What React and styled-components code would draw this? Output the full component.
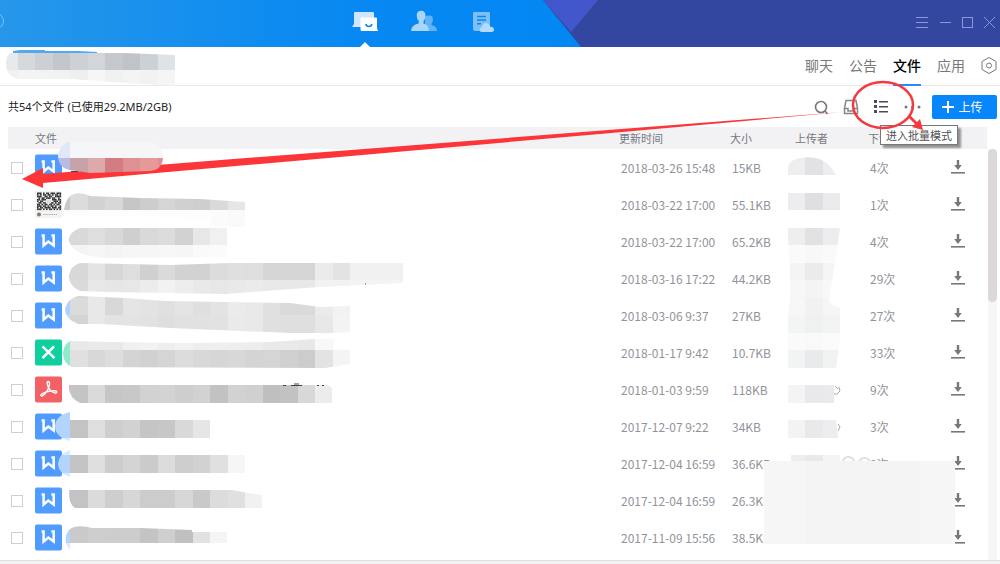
import React from 'react';
import styled, { createGlobalStyle } from 'styled-components';

const GlobalStyle = createGlobalStyle`
    * {
      box-sizing: border-box;
    }

    body {
      margin: 0;
      background-color: #fff;
      font-family: 'Noto Sans CJK SC', 'Noto Sans', sans-serif;
      font-size: 12px;
      color: #333;
    }

    button {
      font-family: inherit;
      border: 0;
      padding: 0;
      background: none;
      cursor: pointer;
    }

    svg {
      display: block;
    }
`;

const Window = styled.div`
    position: relative;
    display: flex;
    flex-direction: column;
    min-height: 100vh;
    overflow: hidden;
`;

const TitleBar = styled.header`
    position: relative;
    display: flex;
    align-items: stretch;
    justify-content: space-between;
    height: 47px;
    background: linear-gradient(90deg, #2697ea 0%, #0788f2 36%, #0287f3 60%);
`;

const Facets = styled.svg`
    position: absolute;
    top: 0;
    right: 0;
`;

const AvatarRing = styled.div`
    width: 16px;
    height: 16px;
    margin: 13px 0 0 -12px;
    border: 1px solid #7cc0f5;
    border-radius: 50%;
`;

const MainNav = styled.nav`
    display: flex;
    gap: 31px;
    margin-right: 73px;
`;

const NavButton = styled.button`
    position: relative;
    display: flex;
    justify-content: center;
    width: 28px;
    padding-top: 10px;

    &::after {
      content: '';
      display: ${({ $active }) => ($active ? 'block' : 'none')};
      position: absolute;
      bottom: 0;
      left: 9px;
      border: 5px solid transparent;
      border-top: 0;
      border-bottom-color: #fff;
    }
`;

const WindowButtons = styled.div`
    position: relative;
    display: flex;
    align-items: center;
    gap: 8px;
    padding: 0 4px 4px 0;
`;

const WindowButton = styled.button`
    display: flex;
    width: 14px;
    height: 14px;
`;

const GroupBar = styled.div`
    display: flex;
    align-items: stretch;
    justify-content: flex-end;
    height: 39px;
    padding-right: 3px;
    border-bottom: 1px solid #e8e8ea;
`;

const Tabs = styled.nav`
    display: flex;
    gap: 16px;
    margin-right: 16px;
`;

const Tab = styled.a`
    display: flex;
    align-items: center;
    height: 39px;
    padding-bottom: 1px;
    font-size: 14px;
    text-decoration: none;
    color: ${({ $active }) => ($active ? '#000' : '#77787c')};
    font-weight: ${({ $active }) => ($active ? 500 : 400)};
    border-bottom: 2px solid ${({ $active }) => ($active ? '#2f86f6' : 'transparent')};
`;

const ToolBar = styled.div`
    display: flex;
    align-items: center;
    justify-content: space-between;
    height: 41px;
    padding: 0 3px 0 8px;
`;

const Usage = styled.p`
    margin: 0;
    font-family: 'Noto Sans', 'Noto Sans CJK SC', sans-serif;
    font-size: 11px;
    line-height: 18px;
    color: #222;
`;

const Tools = styled.div`
    display: flex;
    align-items: center;
    gap: 14px;
`;

const ToolButton = styled.button`
    display: flex;
    width: ${({ $wide }) => ($wide ? 18 : 16)}px;
    height: 16px;
`;

const UploadButton = styled.button`
    display: flex;
    align-items: center;
    justify-content: center;
    gap: 4px;
    width: 65px;
    height: 24px;
    margin-left: -3px;
    padding-right: 4px;
    border-radius: 2px;
    background-color: #0787fb;
    color: #fff;
    font-size: 12px;
`;

const FileArea = styled.main`
    display: flex;
    flex: 1;
    padding: 0 3px 0 8px;
`;

const FileTable = styled.table`
    flex: 1;
    width: 100%;
    align-self: flex-start;
    table-layout: fixed;
    border-collapse: collapse;
`;

const HeadCell = styled.th`
    height: 22px;
    padding: 0;
    background-color: #f2f2f4;
    color: #77787c;
    font-size: 11px;
    font-weight: 400;
    line-height: 18px;
    text-align: left;
`;

const Cell = styled.td`
    height: 37px;
    padding: 0 0 0 ${({ $indent }) => $indent || 0}px;
    color: #92939a;
    line-height: 18px;
    white-space: nowrap;
`;

const Check = styled.input`
    display: block;
    appearance: none;
    width: 12px;
    height: 12px;
    margin: 0 0 0 3px;
    border: 1px solid #cfcfd1;
    background-color: #fff;
`;

const DownloadButton = styled.button`
    display: flex;
    width: 16px;
    height: 16px;
`;

const ScrollTrack = styled.div`
    width: 9px;
    margin-top: 22px;
    margin-left: 1px;
    background-color: #f6f6f7;
`;

const ScrollThumb = styled.div`
    height: 153px;
    border-radius: 5px;
    background-color: #dcd7d9;
`;

const BottomEdge = styled.footer`
    height: 4px;
    border-top: 1px solid #dfdfe1;
    background-color: #f3f3f4;
`;

const Overlay = styled.svg`
    position: absolute;
    top: 0;
    ${({ $side }) => $side}: 0;
    pointer-events: none;
`;

const LongArrow = styled.svg`
    position: absolute;
    top: 0;
    left: 0;
    width: 100%;
    height: 200px;
    pointer-events: none;
`;

const Tooltip = styled.div`
    position: absolute;
    top: 125px;
    right: 42px;
    padding: 0 5px;
    border: 1px solid #77777a;
    background-color: #fff;
    box-shadow: 3px 3px 2px rgba(0, 0, 0, 0.4);
    color: #505055;
    font-size: 11px;
    line-height: 18px;
    white-space: nowrap;
`;

const files = [
    { type: 'word', time: '2018-03-26 15:48', size: '15KB', count: '4次' },
    { type: 'image', time: '2018-03-22 17:00', size: '55.1KB', count: '1次' },
    { type: 'word', time: '2018-03-22 17:00', size: '65.2KB', count: '4次' },
    { type: 'word', time: '2018-03-16 17:22', size: '44.2KB', count: '29次' },
    { type: 'word', time: '2018-03-06 9:37', size: '27KB', count: '27次' },
    { type: 'excel', time: '2018-01-17 9:42', size: '10.7KB', count: '33次' },
    { type: 'pdf', time: '2018-01-03 9:59', size: '118KB', count: '9次' },
    { type: 'word', time: '2017-12-07 9:22', size: '34KB', count: '3次' },
    { type: 'word', time: '2017-12-04 16:59', size: '36.6KB', count: '8次' },
    { type: 'word', time: '2017-12-04 16:59', size: '26.3KB', count: '' },
    { type: 'word', time: '2017-11-09 15:56', size: '38.5KB', count: '' },
];

// Mosaic strokes that hide names. Tiles are 17.5 wide and high; each band
// lists its tile colours from column `col` on.
const fileMarks = [
    {
        d: 'M20 50 L100 52 L175 55 V86 L125 83 L72 79 H18 Q6 76 6 64 Q6 54 14 50Z',
        bands: [
            { row: 3, col: 0, c: 'e8e9ea d5d9dc ccd0d4 c3c7cc cdd1d5 d2d6da c5c9ce c0c4c9 ccd1d6 e0e3e6' },
            { row: 4, col: 0, c: 'f1f1f1 f4f4f4 f2f3f3 f1f2f3 eeefef f6f6f6 f0f2f2 f4f4f4 f2f2f3 f5f5f5' },
        ],
    },
    {
        d: 'M68 142 H152 Q163 146 163 158 Q162 170 150 171 L90 173 L70 170 Q58 168 58 155 Q60 145 68 142Z',
        bands: [
            { row: 8, col: 3, c: 'dfe8f6 f5f6f8 f6f6f8 f6f6f8 f6f6f8 f6f6f8 f6f6f8' },
            { row: 9, col: 3, c: 'b8bbe4 c7a2a8 dda9ab d27d82 df9093 e79899 e38d90' },
        ],
    },
    {
        d: 'M64 210 Q66 196 74 194 Q82 192 90 196 L140 198 L200 199 L245 202 V227 H210 V218 L72 216 Z',
        bands: [
            { row: 11, col: 3, c: 'c8c8c8 dcdcdc d2d2d2 d8d8d8 c6c6c6 cdcdcd d5d5d5 d0d0d0 cecece dadada e6e6e6' },
            { row: 12, col: 3, c: 'fafafa fcfcfc fdfdfd fdfdfd fdfdfd fdfdfd fdfdfd fdfdfd fdfdfd fbfbfb fafafa' },
        ],
    },
    {
        d: 'M80 228 H227 V257 L105 258 Q72 256 69 240 Q69 232 80 228Z',
        bands: [
            { row: 13, col: 3, c: 'acd0fa d9d9d9 dedede d8d8d8 cfcfcf d9d9d9 dcdcdc d2d2d2 e7e7e7 f0f0f0' },
            { row: 14, col: 3, c: 'e5f0ff f4f4f4 f6f6f6 f4f4f4 f6f6f6 f6f6f6 f7f7f7 f6f6f6 fafafa fbfbfb' },
        ],
    },
    {
        d: 'M80 263 L170 265 L230 263 H403 V283 L320 287 L225 294 L110 292 L80 291 Q69 286 69 276 Q70 266 80 263Z',
        bands: [
            { row: 15, col: 3, c: 'b5d3fb d8d8d8 e4e4e4 d7d7d7 dedede d0d0d0 dadada d2d2d2 d2d2d2 dcdcdc dfdfdf dedede d5d5d5 d5d5d5 d5d5d5 ebebeb e3e3e3 f1f1f1 f1f1f1 f1f1f1' },
            { row: 16, col: 3, c: 'b5d3fb dadada e8e8e8 e6e6e6 e7e7e7 ececec f2f2f2 ededed e9e9e9 e7e7e7 e9e9e9 ebebeb e9e9e9 e8e8e8 e8e8e8 f2f2f2 f2f2f2 f4f4f4 f4f4f4 f4f4f4' },
        ],
    },
    {
        d: 'M78 296 L125 298 L165 301 L290 303 L320 307 L350 306 V332 L315 334 L240 331 L170 328 L100 324 H78 Q65 319 65 309 Q67 299 78 296Z',
        bands: [
            { row: 16, col: 3, c: 'b2d0fd d5d5d5 e6e6e6 d8d8d8 e3e3e3 e2e2e2 e1e1e1 e0e0e0 dfdfdf e4e4e4 e9e9e9 e6e6e6 dadada dadada dddddd ebebeb f1f1f1' },
            { row: 17, col: 3, c: 'b2d0fd dbdbdb e8e8e8 d8d8d8 e5e5e5 e3e3e3 e0e0e0 e4e4e4 dfdfdf e3e3e3 ebebeb e9e9e9 e0e0e0 dadada dadada ebebeb f2f2f2' },
            { row: 18, col: 3, c: 'c8ddfd d4d4d4 e8e8e8 e3e3e3 e3e3e3 e2e2e2 dedede e1e1e1 e1e1e1 e2e2e2 eaeaea e9e9e9 e0e0e0 dfdfdf dfdfdf e8e8e8 f3f3f3' },
        ],
    },
    {
        d: 'M70 341 L110 342 L180 343 L270 342 L315 339 H334 V349 H350 V364 L325 368 L72 367 Q63 363 63 353 Q64 344 70 341Z',
        bands: [
            { row: 19, col: 3, c: '8eebd0 e8e8e8 eaeaea e9e9e9 f0f0f0 f2f2f2 eeeeee f1f1f1 eeeeee efefef eeeeee ededed e9e9e9 e9e9e9 e8e8e8 f8f8f8 fcfcfc' },
            { row: 20, col: 3, c: '8eebd0 e0e0e0 d8d8d8 dddddd d4d4d4 d1d1d1 d5d5d5 dcdcdc d8d8d8 d6d6d6 d8d8d8 d4d4d4 d5d5d5 d0d0d0 cccccc e3e3e3 f4f4f4' },
        ],
    },
    {
        d: 'M69 385 H328 L332 388 V403 H80 Q69 398 69 387Z',
        bands: [
            { row: 22, col: 3, c: 'f3a2a4 c4c4c4 dadada c6c6c6 c8c8c8 d2d2d2 d3d3d3 cecece d2d2d2 c2c2c2 d2d2d2 d0d0d0 bfbfbf c2c2c2 d8d8d8 ececec' },
        ],
    },
    {
        d: 'M70 412 V441 Q55 437 55 426 Q56 415 70 412Z M70 420 H210 V438 H70Z',
        bands: [
            { row: 23, col: 3, c: 'b3d4ff' },
            { row: 24, col: 3, c: 'b3d4ff c3c3c3 dedede cecece d2d2d2 c5c5c5 c7c7c7 d9d9d9 e6e6e6' },
            { row: 25, col: 3, c: 'd9e9ff' },
        ],
    },
    {
        d: 'M70 450 V477 Q58 473 58 464 Q59 453 70 450Z M70 455 H245 V473 H70Z',
        bands: [
            { row: 25, col: 3, c: 'd9e9ff' },
            { row: 26, col: 3, c: 'b3d4ff c3c3c3 dedede cdcdcd d4d4d4 cbcbcb dcdcdc cecece d2d2d2 e0e0e0 f6f6f6' },
            { row: 27, col: 3, c: 'd9e9ff' },
        ],
    },
    {
        d: 'M69 490 H232 L248 493 L262 495 V508 H75 Q68 504 69 490Z',
        bands: [
            { row: 28, col: 3, c: 'b3d4ff c3c3c3 dbdbdb cecece d7d7d7 cccccc cccccc d7d7d7 c9c9c9 dcdcdc e0e0e0 f1f1f1' },
        ],
    },
    {
        d: 'M70 550 L66 544 Q64 530 74 527 Q82 525 92 528 L140 528 L192 530 V532 H227 V543 H70Z',
        bands: [
            { row: 30, col: 3, c: 'b3d4ff cacaca cecece cdcdcd cdcdcd c4c4c4 cfcfcf c0c0c0 e2e2e2 f5f5f5' },
            { row: 31, col: 3, c: 'd9e9ff' },
        ],
    },
];

const uploaderMarks = [
    {
        d: 'M787 175 Q786 160 800 158 Q820 155 830 166 L836 175Z',
        bands: [
            { row: 8, col: 45, c: 'ededef e2e2e5 ededf0' },
            { row: 9, col: 45, c: 'eeeeef e2e2e5 ededf0' },
        ],
    },
    {
        d: 'M787 192 H840 V210 H787Z',
        bands: [{ row: 11, col: 45, c: 'ededef dfdfe1 ebebed' }],
    },
    {
        d: 'M787 228 H840 L835 263 L829 300 Q830 305 840 308 V340 L836 368 H787 V320 L790 300 V263Z',
        bands: [
            { row: 13, col: 45, c: 'eeeeef e2e2e4 ededef' },
            { row: 14, col: 45, c: 'fafafa f8f8f9 fafafa' },
            { row: 15, col: 45, c: 'f4f4f5 ebebed f5f5f6' },
            { row: 16, col: 45, c: 'f7f7f8 f4f4f5 f8f8f9' },
            { row: 17, col: 45, c: 'f7f7f8 f1f1f2 f6f6f7' },
            { row: 18, col: 45, c: 'f3f4f4 eff0f1 f2f3f3' },
            { row: 19, col: 45, c: 'fafafa f9f9f9 fbfbfb' },
            { row: 20, col: 45, c: 'f2f3f3 e9eaec f1f2f2' },
        ],
    },
    {
        d: 'M787 385 H834 V403 H787Z',
        bands: [{ row: 22, col: 45, c: 'f4f4f5 e9e9eb eaeaec' }],
    },
    {
        d: 'M788 420 H836 L838 438 H788Z',
        bands: [{ row: 24, col: 45, c: 'f3f3f4 e9e9ec ededef' }],
    },
    {
        d: 'M791 455 H840 V462 H791Z',
        bands: [{ row: 26, col: 45, c: 'eeeeef e9e9eb f4f4f5' }],
    },
];

function Mosaic({ id, mark }) {
    return (
        <g clipPath={`url(#${id})`} shapeRendering="crispEdges">
            <clipPath id={id}>
                <path d={mark.d} />
            </clipPath>
            {mark.bands.map((band) =>
                band.c.split(' ').map((color, i) => (
                    <rect
                        key={`${band.row}-${i}`}
                        x={(band.col + i) * 17.5}
                        y={band.row * 17.5}
                        width="17.6"
                        height="17.6"
                        fill={`#${color}`}
                    />
                ))
            )}
        </g>
    );
}

const qrRows = [
    '1110101101110111',
    '1010110110101101',
    '1110011011001111',
    '0101101110110010',
    '1101110000111011',
    '1011000000011101',
    '0110110001101011',
    '1101011011010110',
    '1110110101101001',
    '1011011110111011',
    '1110101011010101',
];

function FileIcon({ type }) {
    if (type === 'image') {
        return (
            <svg width="27" height="27" viewBox="0 0 27 27" role="img" aria-label="图片">
                <rect width="27" height="27" rx="1" fill="#f3f3f3" />
                {qrRows.map((row, y) =>
                    row.split('').map((bit, x) =>
                        bit === '1' ? (
                            <rect key={`${x}-${y}`} x={2 + x * 1.5} y={1.5 + y * 1.6} width="1.6" height="1.6" fill="#333" />
                        ) : null
                    )
                )}
                <ellipse cx="13.5" cy="10.5" rx="3" ry="2" fill="#d7e3ea" />
                <circle cx="4" cy="23.5" r="2" fill="#8c7863" />
                <path d="M8 23.5H22" stroke="#b5b5b5" strokeDasharray="1.5 .6" />
            </svg>
        );
    }
    const fill = { word: '#509bff', excel: '#0fcf9f', pdf: '#f46165' }[type];
    return (
        <svg width="27" height="27" viewBox="0 0 27 27" fill="none" role="img" aria-label={type}>
            <rect width="27" height="26" y=".5" rx="2" fill={fill} />
            {type === 'word' && (
                <path d="M6.600 7.600H8.600V17.500L13.300 13.600L18.700 17.500V7.600H16.400" stroke="#fff" strokeWidth="2.500" />
            )}
            {type === 'excel' && <path d="M7.500 7.300L19.500 19.200M19 7.300L7.500 19.200" stroke="#fff" strokeWidth="2.500" />}
            {type === 'pdf' && (
                <path
                    d="M13 5.500C15.500 5.500 14.500 9.500 13.300 12.500C11.500 16.500 8 20.800 6.200 19.800C4.500 18.300 9.500 16.200 14 15.300C18 14.400 22 14.400 21.700 16.200C21.300 18.200 16.700 16.100 14.700 13.400C12.700 10.900 11 5.600 13 5.500Z"
                    stroke="#fff"
                    strokeWidth="1.400"
                />
            )}
        </svg>
    );
}

function DownloadIcon() {
    return (
        <svg width="16" height="16" viewBox="0 0 16 16" fill="#77787c">
            <path d="M6.800 0H9.200V5H11.800L8 10L4.200 5H6.800Z" />
            <rect x="1" y="12" width="14" height="1.600" />
        </svg>
    );
}

function TopBar() {
    return (
        <TitleBar>
            <Facets width="460" height="47" viewBox="540 0 460 47" aria-hidden="true">
                <path d="M543 0H1000V47H581Z" fill="#3347a0" />
                <path d="M543 0H598L571 32Z" fill="#4157cb" />
            </Facets>
            <AvatarRing />
            <MainNav>
                <NavButton $active aria-label="消息">
                    <svg width="28" height="24" viewBox="0 0 28 24">
                        <path d="M3.500 2H22Q23 2 23 3V17H1L3 14V3Q3 2 4 2Z" fill="#cfe6fc" />
                        <path d="M10 7.500H25Q26 7.500 26 8.500V18L27 21H11Q9.500 21 9.500 19.500V8.500Q9.500 7.500 10 7.500Z" fill="#fff" />
                        <path d="M15 14Q15 16.500 18 16.500Q20.700 16.500 20.700 14" fill="none" stroke="#0787f2" strokeWidth="1.600" />
                    </svg>
                </NavButton>
                <NavButton aria-label="联系人">
                    <svg width="28" height="24" viewBox="0 0 28 24">
                        <path d="M19.500 5.500Q23 5.500 23 9.500Q23 12 21.500 13.500V15Q27 16 27 21H15V6Z" fill="#61b2f7" />
                        <path d="M11 .7Q15.500 .7 15.500 5.500Q15.500 9 13.500 11V13.500Q19 15 19 21H1Q1 15 8.700 13.500V11Q6.700 9 6.700 5.500Q6.700 .7 11 .7Z" fill="#a9d5fa" />
                    </svg>
                </NavButton>
                <NavButton aria-label="文档">
                    <svg width="28" height="24" viewBox="0 0 28 24">
                        <path d="M5 2H20Q21 2 21 3V21H6Q4 21 4 19V3Q4 2 5 2Z" fill="#7dbff8" />
                        <path d="M8 6.500H17M8 10H17M8 13.800H12" stroke="#0787f2" strokeWidth="1.400" />
                        <path d="M13 22Q10.500 22 10.500 19.500Q10.500 17.500 13 17Q14 13 17.500 13Q20.500 13.500 21 16.500Q25 17 25 19.500Q25 22 22.500 22Z" fill="#b5dafb" />
                    </svg>
                </NavButton>
            </MainNav>
            <WindowButtons>
                <WindowButton aria-label="菜单">
                    <svg width="14" height="14" viewBox="0 0 14 14" stroke="#8a98d6">
                        <path d="M0 2.500H12M0 7.500H12M0 12.500H12" />
                    </svg>
                </WindowButton>
                <WindowButton aria-label="最小化">
                    <svg width="14" height="14" viewBox="0 0 14 14" stroke="#8a98d6">
                        <path d="M2 7.500H13" />
                    </svg>
                </WindowButton>
                <WindowButton aria-label="最大化">
                    <svg width="14" height="14" viewBox="0 0 14 14" fill="none" stroke="#8a98d6">
                        <rect x="2.500" y="2.500" width="10" height="10" />
                    </svg>
                </WindowButton>
                <WindowButton aria-label="关闭">
                    <svg width="14" height="14" viewBox="0 0 14 14" stroke="#8a98d6">
                        <path d="M2 2L13 13M13 2L2 13" />
                    </svg>
                </WindowButton>
            </WindowButtons>
        </TitleBar>
    );
}

function Annotations() {
    return (
        <>
            <LongArrow viewBox="0 0 1000 200" preserveAspectRatio="none" aria-hidden="true">
                <path d="M843 112L260 157L43 174V168L22 179L43 188V183L260 164L600 134Z" fill="#fb3538" />
            </LongArrow>
            <Overlay $side="left" width="420" height="560" aria-hidden="true">
                {fileMarks.map((mark, i) => (
                    <Mosaic key={i} id={`file-mark-${i}`} mark={mark} />
                ))}
                <path d="M13 53V51L20 50H45V51H78L97 52V53Z" fill="#4faaf2" />
                <path d="M71 171.500H78M283 385.500H286M291 385.500H302M294 384H299M317 385.500H319M322 385.500H324M365 284H366" stroke="#444" />
            </Overlay>
            <Overlay $side="right" width="240" height="560" viewBox="760 0 240 560" aria-hidden="true">
                {uploaderMarks.map((mark, i) => (
                    <Mosaic key={i} id={`uploader-mark-${i}`} mark={mark} />
                ))}
                <path d="M835 386L838 389M834 394H837L840 391L839 387M838 424L840 427L838 431" fill="none" stroke="#a5a6ab" />
                <g fill="none" stroke="#dfdfe0" strokeWidth="2">
                    <circle cx="848.500" cy="463" r="6" />
                    <circle cx="864.500" cy="464" r="6" />
                </g>
                <rect x="764" y="461" width="191" height="83" fill="#f6f6f6" />
                <rect x="806" y="461" width="114" height="83" fill="#f4f4f4" />
            </Overlay>
        </>
    );
}

export default function App() {
    return (
        <Window>
            <GlobalStyle />
            <TopBar />
            <GroupBar>
                <Tabs>
                    <Tab href="#chat">聊天</Tab>
                    <Tab href="#notice">公告</Tab>
                    <Tab href="#files" $active>文件</Tab>
                    <Tab href="#apps">应用</Tab>
                </Tabs>
                <ToolButton aria-label="设置">
                    <svg width="16" height="38" viewBox="0 0 16 38" fill="none" stroke="#77787c">
                        <path d="M8 10.500L15 14.500V22.500L8 26.500L1 22.500V14.500Z" />
                        <circle cx="8" cy="18.500" r="2.500" />
                    </svg>
                </ToolButton>
            </GroupBar>
            <ToolBar>
                <Usage>共54个文件 (已使用29.2MB/2GB)</Usage>
                <Tools>
                    <ToolButton aria-label="搜索">
                        <svg width="16" height="16" viewBox="0 0 16 16" fill="none" stroke="#77787c" strokeWidth="1.600">
                            <circle cx="8" cy="8" r="5.500" />
                            <path d="M12 12L14.500 15" />
                        </svg>
                    </ToolButton>
                    <ToolButton aria-label="收件箱">
                        <svg width="16" height="16" viewBox="0 0 16 16" fill="none" stroke="#85868a" strokeWidth="1.500">
                            <path d="M3 1.500H13L14.500 9V14.500H1.500V9Z" />
                            <path d="M1.500 9.500H5V12H11V9.500H14.500" />
                        </svg>
                    </ToolButton>
                    <ToolButton aria-label="进入批量模式" aria-describedby="batch-tip">
                        <svg width="16" height="16" viewBox="0 0 16 16" fill="#4a4d58">
                            <path d="M1 1H4V4H1ZM1 6H4V9H1ZM1 11H4V14H1ZM6 2H15V3.500H6ZM6 7H15V8.500H6ZM6 12H15V13.500H6Z" />
                        </svg>
                    </ToolButton>
                    <ToolButton $wide aria-label="更多">
                        <svg width="18" height="16" viewBox="0 0 18 16" fill="#77787c">
                            <circle cx="3" cy="8" r="1.500" />
                            <circle cx="9.500" cy="8" r="1.500" />
                            <circle cx="16" cy="8" r="1.500" />
                        </svg>
                    </ToolButton>
                    <UploadButton>
                        <svg width="12" height="12" viewBox="0 0 12 12" stroke="#fff" strokeWidth="2">
                            <path d="M6 0V12M0 6H12" />
                        </svg>
                        上传
                    </UploadButton>
                </Tools>
            </ToolBar>
            <FileArea>
                <FileTable>
                    <colgroup>
                        <col width="27" />
                        <col />
                        <col width="111" />
                        <col width="65" />
                        <col width="73" />
                        <col width="75" />
                        <col width="44" />
                    </colgroup>
                    <thead>
                        <tr>
                            <HeadCell aria-label="选择" />
                            <HeadCell>文件</HeadCell>
                            <HeadCell>更新时间</HeadCell>
                            <HeadCell>大小</HeadCell>
                            <HeadCell>上传者</HeadCell>
                            <HeadCell>下载</HeadCell>
                            <HeadCell aria-label="操作" />
                        </tr>
                    </thead>
                    <tbody>
                        {files.map((file, i) => (
                            <tr key={i}>
                                <Cell>
                                    <Check type="checkbox" aria-label={`选择第${i + 1}个文件`} />
                                </Cell>
                                <Cell><FileIcon type={file.type} /></Cell>
                                <Cell $indent={2}>{file.time}</Cell>
                                <Cell $indent={2}>{file.size}</Cell>
                                <Cell />
                                <Cell $indent={2}>{file.count}</Cell>
                                <Cell $indent={7}>
                                    <DownloadButton aria-label="下载">
                                        <DownloadIcon />
                                    </DownloadButton>
                                </Cell>
                            </tr>
                        ))}
                    </tbody>
                </FileTable>
                <ScrollTrack>
                    <ScrollThumb />
                </ScrollTrack>
            </FileArea>
            <BottomEdge />
            <Annotations />
            <Tooltip id="batch-tip" role="tooltip">进入批量模式</Tooltip>
            <Overlay $side="right" width="160" height="140" viewBox="840 0 160 140" aria-hidden="true">
                <ellipse cx="883" cy="105" rx="30" ry="23" fill="none" stroke="#f5393c" strokeWidth="2.500" />
                <path d="M910 115L917 122L920 119L923 130L912 127L915 124L908 117Z" fill="#f5393c" />
            </Overlay>
        </Window>
    );
}
